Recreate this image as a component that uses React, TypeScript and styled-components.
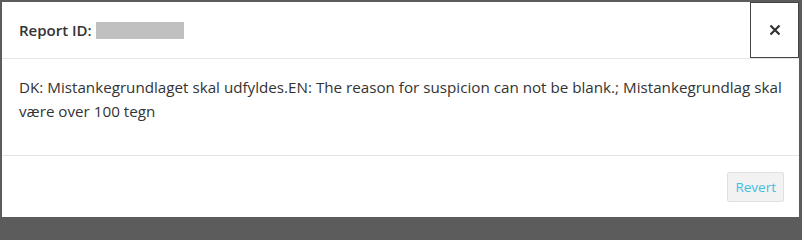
import React from "react";
import styled, { createGlobalStyle } from "styled-components";

const Global = createGlobalStyle`
  html, body { margin: 0; padding: 0; }
  body {
    background: #5c5c5c;
    font-family: "Open Sans", "Noto Sans", sans-serif;
    color: #333;
  }
`;

const Backdrop = styled.div`
  width: 802px;
  height: 220px;
  box-sizing: border-box;
  padding: 2px 3px 3px 2px;
  background: #5c5c5c;
`;

const Modal = styled.div`
  height: 100%;
  background: #fff;
  display: flex;
  flex-direction: column;
`;

const Header = styled.div`
  display: flex;
  align-items: stretch;
  height: 57px;
  border-bottom: 1px solid #e5e5e5;
  box-sizing: border-box;
`;

const Title = styled.h4`
  flex: 1;
  margin: 0;
  padding-left: 17px;
  display: flex;
  align-items: center;
  gap: 4px;
  font-size: 15px;
  font-weight: 600;
  color: #333;
`;

const Redacted = styled.span`
  display: inline-block;
  width: 88px;
  height: 17px;
  background: #c0c0c0;
`;

const CloseButton = styled.button`
  width: 49px;
  border: 1px solid #444;
  background: #fff;
  padding: 0;
  display: flex;
  align-items: center;
  justify-content: center;
  cursor: pointer;
`;

const Body = styled.div`
  flex: 1;
  padding: 16px 17px 12px;
  font-size: 15.2px;
  line-height: 24px;
  color: #333;
  border-bottom: 1px solid #e5e5e5;
`;

const Footer = styled.div`
  height: 61px;
  display: flex;
  align-items: center;
  justify-content: flex-end;
  padding-right: 15px;
  box-sizing: border-box;
`;

const RevertButton = styled.button`
  font-family: "Open Sans", "Noto Sans", sans-serif;
  font-size: 13.5px;
  color: #3fbde3;
  background: #f2f2f2;
  border: 1px solid #e0e0e0;
  border-radius: 2px;
  height: 30px;
  padding: 0 7px;
  cursor: pointer;
`;

export default function App() {
  return (
    <>
      <Global />
      <Backdrop>
        <Modal>
          <Header>
            <Title>
              Report ID: <Redacted />
            </Title>
            <CloseButton aria-label="Close">
              <svg width="12" height="12" viewBox="0 0 12 12">
                <path d="M1.5 1.5 L10.5 10.5 M10.5 1.5 L1.5 10.5" stroke="#333" strokeWidth="2.2" />
              </svg>
            </CloseButton>
          </Header>
          <Body>
            DK: Mistankegrundlaget skal udfyldes.EN: The reason for suspicion can not be blank.; Mistankegrundlag skal være over 100 tegn
          </Body>
          <Footer>
            <RevertButton>Revert</RevertButton>
          </Footer>
        </Modal>
      </Backdrop>
    </>
  );
}
